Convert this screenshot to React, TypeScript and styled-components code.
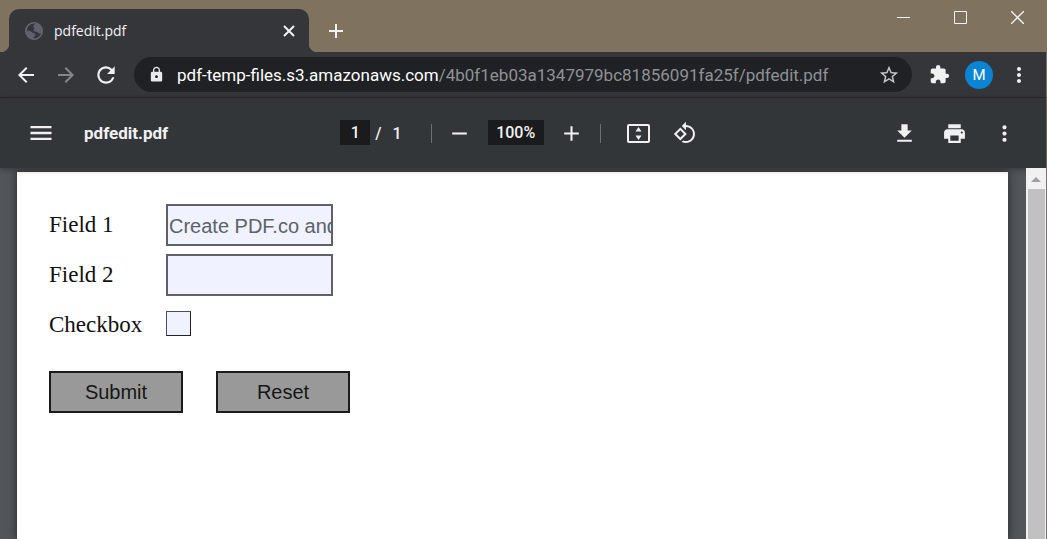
import React from "react";
import styled, { createGlobalStyle } from "styled-components";
import {
  MdAdd,
  MdArrowBack,
  MdArrowForward,
  MdExtension,
  MdLock,
  MdMenu,
  MdMoreVert,
  MdPrint,
  MdRefresh,
  MdRemove,
  MdStarOutline,
} from "react-icons/md";

const GlobalStyle = createGlobalStyle`
  * { box-sizing: border-box; }
  body { margin: 0; overflow: hidden; background: #52565a; }
  button { font: inherit; }
  svg { flex: none; }
`;

const Window = styled.div`
  display: flex;
  flex-direction: column;
  min-height: 100vh;
  border-right: 1px solid #7f735f;
  font-family: "Open Sans", "Noto Sans", sans-serif;
`;

const TitleBar = styled.header`
  display: flex;
  height: 52px;
  padding-left: 9px;
  background: #7f735f;
`;

const Tab = styled.div`
  position: relative;
  display: flex;
  align-items: center;
  gap: 11px;
  width: 300px;
  margin-top: 9px;
  padding: 0 10px 0 16px;
  border-radius: 10px 10px 0 0;
  background: #35363a;
  color: #f1f3f4;
  font-size: 14px;

  &::before,
  &::after {
    content: "";
    position: absolute;
    bottom: 0;
    width: 9px;
    height: 9px;
  }
  &::before {
    left: -9px;
    background: radial-gradient(circle at 0 0, transparent 9px, #35363a 10px);
  }
  &::after {
    right: -9px;
    background: radial-gradient(circle at 100% 0, transparent 9px, #35363a 10px);
  }
`;

const TabTitle = styled.span`
  flex: 1;
`;

const IconButton = styled.button<{ $w?: number; $h?: number; $color?: string }>`
  display: flex;
  align-items: center;
  justify-content: center;
  flex: none;
  width: ${(p) => p.$w ?? 40}px;
  height: ${(p) => p.$h ?? 36}px;
  padding: 0;
  border: 0;
  background: none;
  color: ${(p) => p.$color ?? "#f1f1f1"};
`;

const NewTab = styled(IconButton)`
  margin: 13px 0 0 9px;
`;

const WindowButtons = styled.div`
  display: flex;
  margin-left: auto;
`;

const AddressBar = styled.nav`
  display: flex;
  align-items: center;
  height: 46px;
  padding: 0 7px 0 6px;
  border-bottom: 1px solid #28292c;
  background: #35363a;
`;

const Omnibox = styled.div`
  display: flex;
  align-items: center;
  flex: 1;
  min-width: 0;
  height: 35px;
  margin: 0 7px 0 8px;
  padding: 0 3px 0 14px;
  border-radius: 18px;
  background: #202124;
  color: #e8eaed;
`;

const Url = styled.span`
  flex: 1;
  min-width: 0;
  margin-left: 12px;
  overflow: hidden;
  color: #8f9296;
  font-family: Roboto, "Open Sans", sans-serif;
  font-size: 17px;
  line-height: 24px;
  white-space: nowrap;
`;

const Host = styled.span`
  color: #ffffff;
`;

const Avatar = styled.span`
  display: grid;
  place-items: center;
  width: 28px;
  height: 28px;
  border-radius: 50%;
  background: #0b85d3;
  color: #ffffff;
  font-family: Roboto, sans-serif;
  font-size: 15px;
`;

const PdfToolbar = styled.div`
  position: relative;
  display: grid;
  grid-template-columns: 1fr auto 1fr;
  align-items: center;
  height: 70px;
  padding: 0 17px 0 16px;
  background: #323639;
  box-shadow: 0 2px 6px rgba(0, 0, 0, 0.3);
  color: #f1f1f1;
  font-family: Roboto, sans-serif;
  font-size: 16px;
`;

const ToolGroup = styled.div<{ $end?: boolean }>`
  display: flex;
  align-items: center;
  justify-content: ${(p) => (p.$end ? "flex-end" : "flex-start")};
`;

const PageTools = styled(ToolGroup)`
  margin-right: 12px;
`;

const DocumentName = styled.h1`
  margin: 0 0 0 18px;
  font-size: 17px;
  font-weight: 700;
`;

const ValueInput = styled.input<{ $w: number }>`
  width: ${(p) => p.$w}px;
  height: 25px;
  margin: 0 0 2px;
  padding: 0;
  border: 0;
  background: #191b1c;
  color: #f1f1f1;
  font: inherit;
  font-weight: 500;
  text-align: center;
`;

const PageCount = styled.span`
  display: flex;
  gap: 11px;
  margin: 0 29px 0 5px;
  font-weight: 500;
`;

const Divider = styled.span`
  width: 1px;
  height: 19px;
  background: #6c6f71;
`;

const Viewer = styled.main`
  display: flex;
  flex: 1;
  background: #52565a;
`;

const Page = styled.form`
  flex: 1;
  margin: 4px 18px 0 17px;
  padding: 28px 32px 32px;
  background: #ffffff;
  box-shadow: 0 0 8px 1px rgba(0, 0, 0, 0.45);
`;

const FormRow = styled.div`
  display: grid;
  grid-template-columns: 117px auto;
  align-items: center;
  justify-content: start;
  height: 50px;
  color: #111111;
  font-family: "Liberation Serif", serif;
  font-size: 23px;
  line-height: 42px;
`;

const TextField = styled.input`
  width: 167px;
  height: 42px;
  padding: 2px 0 0 1px;
  border: 2px solid #5f6167;
  border-radius: 0;
  background: #f0f3ff;
  color: #5b6269;
  font-family: "Liberation Sans", sans-serif;
  font-size: 20px;
`;

const CheckField = styled.input`
  appearance: none;
  width: 25px;
  height: 25px;
  margin: 0 0 4px;
  border: 1px solid #4d5056;
  border-right-color: #202124;
  border-bottom-color: #202124;
  background: #f0f3ff;
`;

const Actions = styled.div`
  display: flex;
  gap: 33px;
  margin-top: 21px;
`;

const FormButton = styled.button`
  width: 134px;
  height: 42px;
  padding: 0;
  border: 2px solid #1c1c1c;
  background: #999999;
  color: #161616;
  font-family: "Liberation Sans", sans-serif;
  font-size: 20px;
`;

const Scrollbar = styled.div`
  position: relative;
  display: flex;
  flex-direction: column;
  align-items: center;
  width: 20px;
  background: #f1f1f1;
`;

const ScrollArrow = styled.span`
  margin: 9px 0 7px;
  border: 5px solid transparent;
  border-top: 0;
  border-bottom-color: #a0a0a0;
`;

const Thumb = styled.span`
  flex: 1;
  width: 17px;
  background: #c1c1c1;
`;

function Line({ d, size, width = 1 }: { d: string; size: number; width?: number }) {
  return (
    <svg width={size} height={size} viewBox={`0 0 ${size} ${size}`} fill="none" stroke="currentColor" strokeWidth={width}>
      <path d={d} />
    </svg>
  );
}

function GlobeIcon() {
  return (
    <svg width="18" height="18" viewBox="0 0 18 18">
      <circle cx="9" cy="9" r="8.200" fill="#35363a" stroke="#686a70" strokeWidth="1.500" />
      <path d="M10 1C14 1.500 17 5 17 9C17 10.500 16.500 11 15.500 11.500C14 12 13.500 10.500 12 10C10.500 9.500 9 9.500 8.500 8.500C8 7.500 9.500 7 9.500 6C9.500 5 8 5.500 8 4.500C8 3.500 10 3 10 1Z" fill="#5f626d" />
      <path d="M1 8.500L5 9C6.500 9.300 6.500 10.500 8 11C9.500 11.500 10.500 11.800 10.500 13C10.500 14.200 8.500 14 8.500 15.500V17C4 17 1 13 1 8.500Z" fill="#5f626d" />
    </svg>
  );
}

function FitPageIcon() {
  return (
    <svg width="23" height="19" viewBox="0 0 23 19">
      <rect x="1" y="1" width="21" height="17" rx="1" fill="none" stroke="currentColor" strokeWidth="2" />
      <path d="M11.5 3l3 4.500h-6zM11.5 16l3-4.500h-6z" fill="currentColor" />
    </svg>
  );
}

function DownloadIcon() {
  return (
    <svg width="25" height="25" viewBox="0 0 24 24" fill="currentColor">
      <path d="M19 9h-4V3H9v6H5l7 7 7-7zM5 18v2h14v-2H5z" />
    </svg>
  );
}

function RotateIcon() {
  return (
    <svg width="24" height="24" viewBox="0 0 24 24" fill="currentColor">
      <path d="M7.340 6.410L.86 12.900l6.490 6.480 6.490-6.480-6.500-6.490zM3.690 12.900l3.660-3.660L11 12.900l-3.660 3.660-3.650-3.660zm15.670-6.260C17.610 4.880 15.300 4 13 4V.76L8.760 5 13 9.240V6c1.790 0 3.580.68 4.950 2.050 2.730 2.730 2.730 7.170 0 9.900C16.580 19.320 14.790 20 13 20c-.97 0-1.940-.21-2.840-.61l-1.490 1.490C10.020 21.620 11.510 22 13 22c2.300 0 4.610-.88 6.360-2.640 3.520-3.510 3.520-9.210 0-12.720z" />
    </svg>
  );
}

export default function App() {
  return (
    <>
      <GlobalStyle />
      <Window>
        <TitleBar>
          <Tab>
            <GlobeIcon />
            <TabTitle>pdfedit.pdf</TabTitle>
            <IconButton $w={20} $h={20} aria-label="Close tab">
              <Line size={12} width={2} d="M1 1L11 11M11 1L1 11" />
            </IconButton>
          </Tab>
          <NewTab $w={36} aria-label="New tab">
            <Line size={16} width={2} d="M8 1V15M1 8H15" />
          </NewTab>
          <WindowButtons>
            <IconButton $w={57} $h={35} aria-label="Minimize">
              <Line size={13} d="M0 6.500H13" />
            </IconButton>
            <IconButton $w={57} $h={35} aria-label="Maximize">
              <Line size={13} d="M.5.5H12.500V12.500H.5Z" />
            </IconButton>
            <IconButton $w={57} $h={35} aria-label="Close window">
              <Line size={13} width={1.4} d="M0 0L13 13M13 0L0 13" />
            </IconButton>
          </WindowButtons>
        </TitleBar>

        <AddressBar>
          <IconButton aria-label="Back">
            <MdArrowBack size={24} />
          </IconButton>
          <IconButton aria-label="Forward" $color="#85878a">
            <MdArrowForward size={24} />
          </IconButton>
          <IconButton aria-label="Reload">
            <MdRefresh size={26} />
          </IconButton>
          <Omnibox>
            <MdLock size={17} />
            <Url>
              <Host>pdf-temp-files.s3.amazonaws.com</Host>/4b0f1eb03a1347979bc81856091fa25f/pdfedit.pdf
            </Url>
            <IconButton aria-label="Bookmark this page" $color="#c6c8ca">
              <MdStarOutline size={22} />
            </IconButton>
          </Omnibox>
          <IconButton aria-label="Extensions">
            <MdExtension size={21} />
          </IconButton>
          <IconButton aria-label="Profile">
            <Avatar>M</Avatar>
          </IconButton>
          <IconButton aria-label="Menu">
            <MdMoreVert size={24} />
          </IconButton>
        </AddressBar>

        <PdfToolbar>
          <ToolGroup>
            <IconButton $w={50} aria-label="Toggle sidebar">
              <MdMenu size={28} />
            </IconButton>
            <DocumentName>pdfedit.pdf</DocumentName>
          </ToolGroup>
          <PageTools>
            <ValueInput $w={30} aria-label="Page number" defaultValue="1" />
            <PageCount>
              <span>/</span>
              <span>1</span>
            </PageCount>
            <Divider />
            <IconButton $w={56} aria-label="Zoom out">
              <MdRemove size={25} />
            </IconButton>
            <ValueInput $w={56} aria-label="Zoom level" defaultValue="100%" />
            <IconButton $w={56} aria-label="Zoom in">
              <MdAdd size={25} />
            </IconButton>
            <Divider />
            <IconButton $w={76} aria-label="Fit to page">
              <FitPageIcon />
            </IconButton>
            <IconButton $w={16} aria-label="Rotate counterclockwise">
              <RotateIcon />
            </IconButton>
          </PageTools>
          <ToolGroup $end>
            <IconButton $w={50} aria-label="Download">
              <DownloadIcon />
            </IconButton>
            <IconButton $w={50} aria-label="Print">
              <MdPrint size={25} />
            </IconButton>
            <IconButton $w={50} aria-label="More actions">
              <MdMoreVert size={25} />
            </IconButton>
          </ToolGroup>
        </PdfToolbar>

        <Viewer>
          <Page onSubmit={(e: React.FormEvent) => e.preventDefault()}>
            <FormRow>
              <label htmlFor="field1">Field 1</label>
              <TextField id="field1" defaultValue="Create PDF.co and" />
            </FormRow>
            <FormRow>
              <label htmlFor="field2">Field 2</label>
              <TextField id="field2" />
            </FormRow>
            <FormRow>
              <label htmlFor="check">Checkbox</label>
              <CheckField id="check" type="checkbox" />
            </FormRow>
            <Actions>
              <FormButton type="submit">Submit</FormButton>
              <FormButton type="reset">Reset</FormButton>
            </Actions>
          </Page>
          <Scrollbar>
            <ScrollArrow />
            <Thumb />
          </Scrollbar>
        </Viewer>
      </Window>
    </>
  );
}
